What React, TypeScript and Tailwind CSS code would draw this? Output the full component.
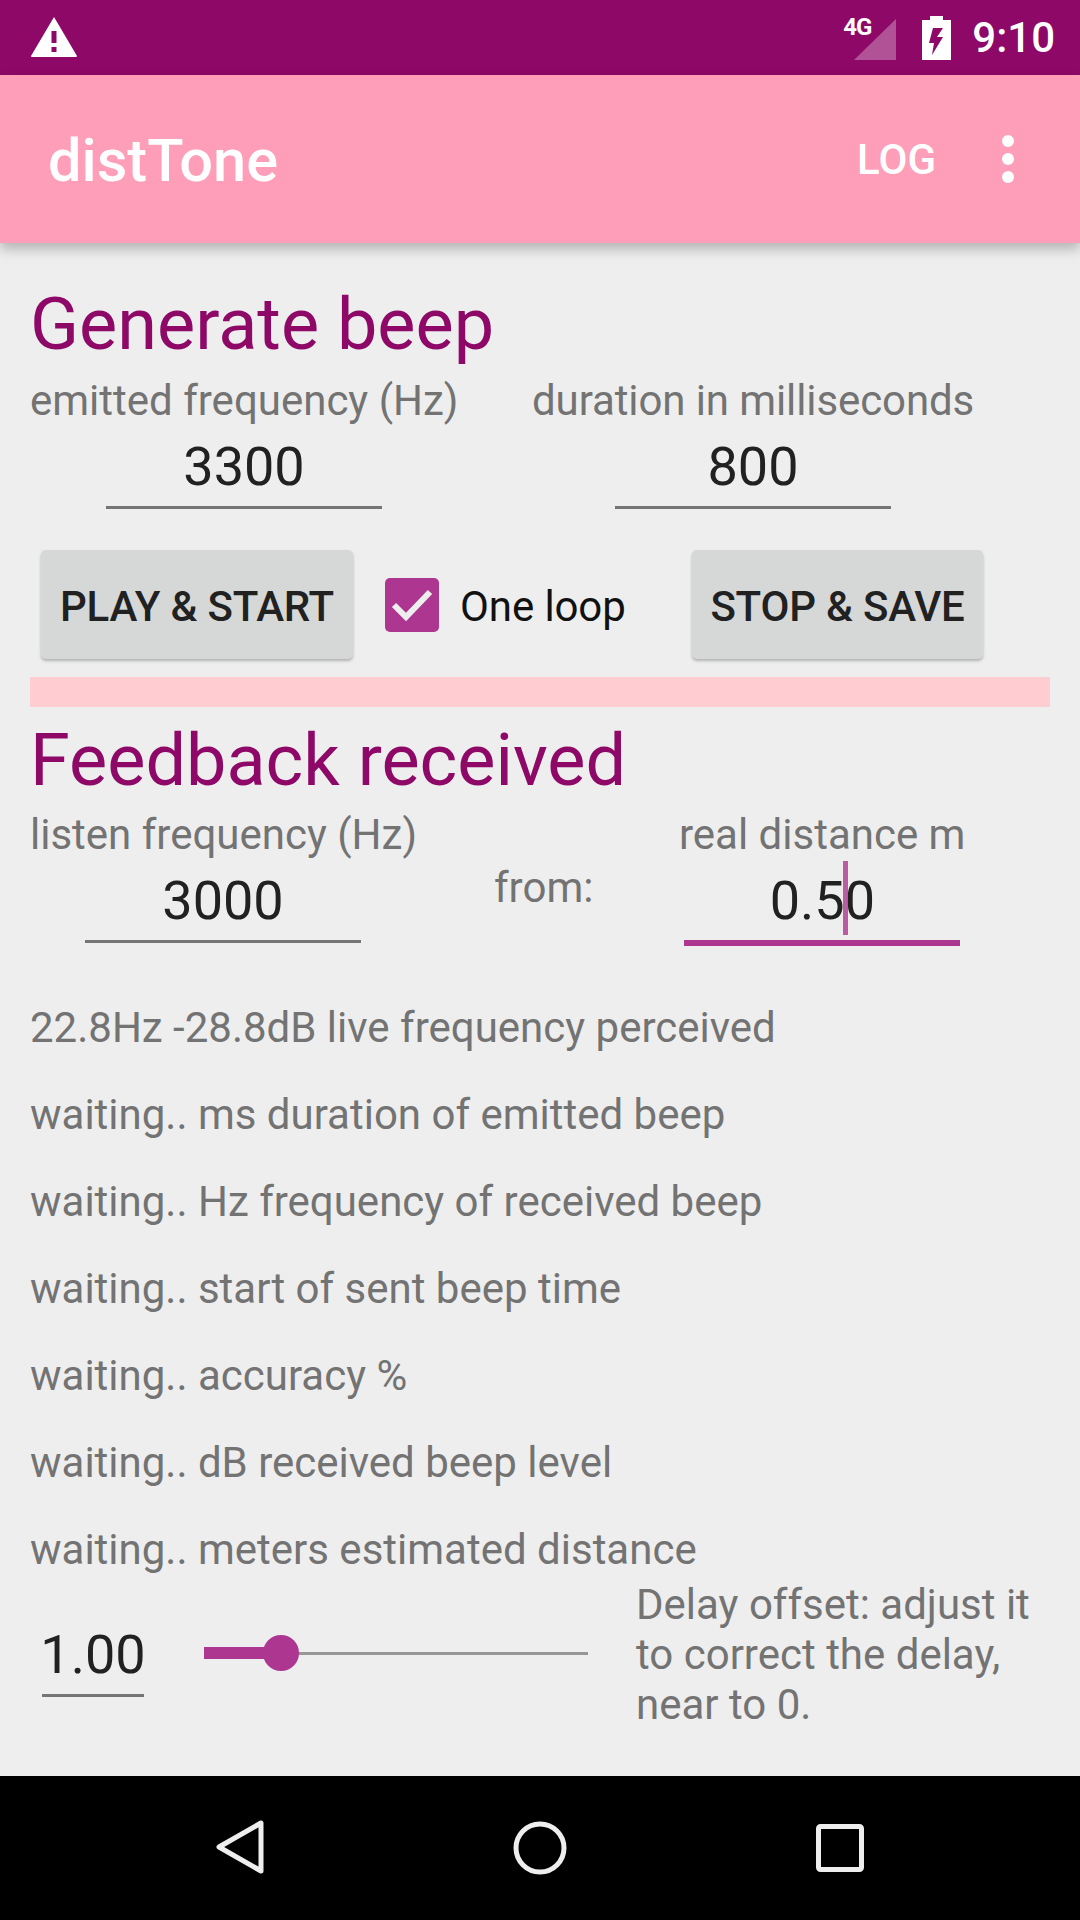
const roboto = "font-['Roboto',sans-serif]";

function Field({ value, width, focused, caret }: { value: string; width: string; focused?: boolean; caret?: boolean }) {
  return (
    <div className={`${width} flex flex-col items-center`}>
      <div className="relative h-[64px] text-[54px] leading-[66px] text-[#212121]">
        {value}
        {caret && <span className="absolute left-[73px] top-[-7px] h-[74px] w-[5px] bg-[#ad3690] opacity-80" />}
      </div>
      <div className={focused ? "mt-[8px] h-[6px] w-full bg-[#ad3690]" : "mt-[8px] h-[3px] w-full bg-[#757575]"} />
    </div>
  );
}

function Btn({ label, width }: { label: string; width: string }) {
  return (
    <div className={`${width} flex h-[109px] items-center justify-center rounded-[5px] bg-[#d6d7d7] pt-[4px] text-[42px] font-medium tracking-[-0.2px] text-[#212121] shadow-[0_2px_3px_rgba(0,0,0,0.25)]`}>
      {label}
    </div>
  );
}

const lines = [
  "22.8Hz -28.8dB live frequency perceived",
  "waiting.. ms duration of emitted beep",
  "waiting.. Hz frequency of received beep",
  "waiting.. start of sent beep time",
  "waiting.. accuracy %",
  "waiting.. dB received beep level",
  "waiting.. meters estimated distance",
];

export default function App() {
  return (
    <div className={`${roboto} flex h-[1920px] w-[1080px] flex-col overflow-hidden bg-[#eeeeee]`}>
      {/* status bar */}
      <div className="flex h-[75px] shrink-0 items-center bg-[#8e0867] pl-[31px] pr-[25px] text-white">
        <svg width="46" height="40" viewBox="0 0 46 40" className="mt-[-1px]">
          <path fillRule="evenodd" fill="#fff" d="M23 0 L46 39 Q46 40 45 40 L1 40 Q0 40 0 39 Z M20.5 14 H25.5 V26 H20.5 Z M20.5 30 H25.5 V35 H20.5 Z" />
        </svg>
        <div className="flex-1" />
        <div className="relative h-[44px] w-[54px]">
          <svg width="42" height="41" viewBox="0 0 42 41" className="absolute left-[11px] top-[3px]">
            <path d="M42 0 V41 H0 Z" fill="#fff" fillOpacity="0.3" />
          </svg>
          <span className="absolute left-0 top-[-2px] text-[24px] font-bold leading-[26px] tracking-[-1px]">4G</span>
        </div>
        <svg width="29" height="44" viewBox="0 0 29 44" className="ml-[25px]">
          <path fillRule="evenodd" fill="#fff" d="M8 0 H21 V4 H29 V44 H0 V4 H8 Z M11 12 L7 27 H12 L10 39 L21 21 H15 L21 12 Z" />
        </svg>
        <span className="ml-[21px] text-[42px] font-medium leading-[50px]">9:10</span>
      </div>

      {/* app bar */}
      <div className="relative z-10 flex h-[168px] shrink-0 items-center bg-[#ff9eb8] pl-[48px] pr-[66px] text-white shadow-[0_6px_12px_rgba(0,0,0,0.25)]">
        <span className="mt-[3px] text-[59.5px] font-medium leading-[70px]">distTone</span>
        <div className="flex-1" />
        <span className="mt-[1px] text-[42px] font-medium leading-[50px]">LOG</span>
        <div className="ml-[66px] flex flex-col gap-[6px]">
          <span className="h-[12px] w-[12px] rounded-full bg-white" />
          <span className="h-[12px] w-[12px] rounded-full bg-white" />
          <span className="h-[12px] w-[12px] rounded-full bg-white" />
        </div>
      </div>

      {/* content */}
      <div className="flex flex-1 flex-col px-[30px]">
        <h1 className="mt-[42px] text-[72px] leading-[80px] text-[#8e0867]">Generate beep</h1>
        <div className="mt-[11px] flex text-[42px] leading-[50px] text-[#737373]">
          <span className="w-[502px]">emitted frequency (Hz)</span>
          <span className="tracking-[-0.1px]">duration in milliseconds</span>
        </div>
        <div className="mt-[8px] flex">
          <Field value="3300" width="w-[276px] ml-[76px]" />
          <Field value="800" width="w-[276px] ml-[233px]" />
        </div>
        <div className="mt-[41px] flex items-center pl-[11px]">
          <Btn label="PLAY & START" width="w-[312px]" />
          <div className="ml-[32px] flex h-[54px] w-[54px] items-center justify-center rounded-[5px] bg-[#ad3690]">
            <svg width="42" height="34" viewBox="0 0 42 34">
              <path d="M3 17 L15 29 L39 4" fill="none" stroke="#eeeeee" strokeWidth="6" />
            </svg>
          </div>
          <span className="ml-[21px] pt-[4px] text-[42px] tracking-[-0.1px] text-[#111111]">One loop</span>
          <div className="flex-1" />
          <Btn label="STOP & SAVE" width="w-[291px] mr-[67px]" />
        </div>
        <div className="mt-[18px] h-[30px] bg-[#ffccd2]" />
        <h1 className="mt-[14px] text-[72px] leading-[80px] text-[#8e0867]">Feedback received</h1>
        <div className="mt-[9px] flex text-[42px] leading-[50px] text-[#737373]">
          <span className="w-[649px]">listen frequency (Hz)</span>
          <span>real distance m</span>
        </div>
        <div className="mt-[8px] flex">
          <Field value="3000" width="w-[276px] ml-[55px]" />
          <span className="ml-[133px] mt-[-5px] h-[50px] text-[42px] leading-[50px] text-[#737373]">from:</span>
          <Field value="0.50" width="w-[276px] ml-[91px]" focused caret />
        </div>
        <div className="mt-[57px] flex flex-col gap-[37px] text-[42px] leading-[50px] text-[#737373]">
          {lines.map((l) => (
            <div key={l}>{l}</div>
          ))}
        </div>
        <div className="mt-[5px] flex items-start">
          <div className="ml-[12px] mt-[43px] flex w-[102px] flex-col items-center">
            <div className="h-[64px] text-[54px] leading-[64px] text-[#212121]">1.00</div>
            <div className="mt-[7px] h-[3px] w-full bg-[#757575]" />
          </div>
          <div className="relative ml-[60px] mt-[55px] flex h-[36px] w-[384px] items-center">
            <div className="h-[3px] w-full bg-[#979797]" />
            <div className="absolute left-0 top-[12px] h-[12px] w-[70px] bg-[#ad3690]" />
            <div className="absolute left-[59px] top-0 h-[36px] w-[36px] rounded-full bg-[#ad3690]" />
          </div>
          <div className="ml-[48px] text-[42px] leading-[50px] text-[#737373]">
            Delay offset: adjust it
            <br />
            to correct the delay,
            <br />
            near to 0.
          </div>
        </div>
      </div>

      {/* nav bar */}
      <div className="relative flex h-[144px] shrink-0 items-center justify-center bg-black">
        <svg width="54" height="60" viewBox="0 0 54 60" className="absolute left-[213px] top-[42px]">
          <path d="M48 5 V53 L6 29 Z" fill="none" stroke="#eeeeee" strokeWidth="5" strokeLinejoin="round" />
        </svg>
        <svg width="56" height="56" viewBox="0 0 56 56" className="absolute left-[512px] top-[44px]">
          <circle cx="28" cy="28" r="24" fill="none" stroke="#eeeeee" strokeWidth="5" />
        </svg>
        <svg width="48" height="48" viewBox="0 0 48 48" className="absolute left-[816px] top-[48px]">
          <rect x="2.5" y="2.5" width="43" height="43" rx="2" fill="none" stroke="#eeeeee" strokeWidth="5" />
        </svg>
      </div>
    </div>
  );
}
